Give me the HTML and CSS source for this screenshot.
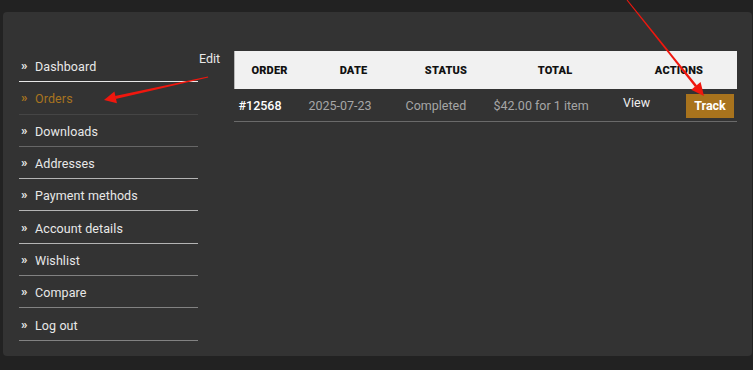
FILE: index.html
```html
<!DOCTYPE html>
<html lang="en">
<head>
<meta charset="utf-8">
<title>My account - Orders</title>
<link rel="stylesheet" href="styles.css">
</head>
<body>
<div class="page">
  <div class="panel">
    <nav class="sidebar">
      <a class="nav-item line-bright" href="#"><span class="chev">»</span>Dashboard</a>
      <a class="nav-item active line-dark" href="#"><span class="chev">»</span>Orders</a>
      <a class="nav-item line-mid" href="#"><span class="chev">»</span>Downloads</a>
      <a class="nav-item line-light" href="#"><span class="chev">»</span>Addresses</a>
      <a class="nav-item line-light" href="#"><span class="chev">»</span>Payment methods</a>
      <a class="nav-item line-light" href="#"><span class="chev">»</span>Account details</a>
      <a class="nav-item line-soft" href="#"><span class="chev">»</span>Wishlist</a>
      <a class="nav-item line-soft" href="#"><span class="chev">»</span>Compare</a>
      <a class="nav-item line-soft" href="#"><span class="chev">»</span>Log out</a>
    </nav>
    <div class="edit-col"><a class="edit" href="#">Edit</a></div>
    <div class="content">
      <div class="orders">
        <div class="thead">
          <div class="th">ORDER</div>
          <div class="th">DATE</div>
          <div class="th">STATUS</div>
          <div class="th">TOTAL</div>
          <div class="th">ACTIONS</div>
        </div>
        <div class="trow">
          <div class="td num">#12568</div>
          <div class="td muted">2025-07-23</div>
          <div class="td muted">Completed</div>
          <div class="td muted">$42.00 for 1 item</div>
          <div class="td actions"><a class="view" href="#">View</a><a class="track" href="#">Track</a></div>
        </div>
      </div>
    </div>
  </div>
  <svg class="annot" width="753" height="370" viewBox="0 0 753 370" aria-hidden="true">
    <polygon fill="#f0170e" points="208,76.6 208.2,77.6 115.6,98.9 115,96" />
    <polygon fill="#f0170e" points="104,100 114.4,91.5 117,103.3" />
    <polygon fill="#f0170e" points="627.4,-0.3 626.6,0.3 695,87 697,85.4" />
    <polygon fill="#f0170e" points="704,96 700.6,82.1 691.2,89.7" />
  </svg>
</div>
</body>
</html>
```

FILE: styles.css
```css
html, body {
  margin: 0;
  padding: 0;
}
body {
  background: #222222;
  font-family: Roboto, "Liberation Sans", Arial, sans-serif;
  color: #e6e6e6;
}
a { text-decoration: none; color: inherit; }

.page {
  position: relative;
  width: 753px;
  height: 370px;
  padding: 12px 1px 0 3px;
  box-sizing: border-box;
}
.panel {
  background: #333333;
  border-radius: 4px;
  height: 344px;
  display: flex;
  padding: 38px 0 0 16px;
  box-sizing: border-box;
}

.sidebar {
  width: 179px;
  display: flex;
  flex-direction: column;
}
.nav-item {
  display: flex;
  align-items: center;
  height: 32.3px;
  padding-top: 2px;
  box-sizing: border-box;
  border-bottom: 1px solid #999;
  font-size: 12.5px;
  color: #e8e8e8;
  letter-spacing: 0.1px;
  flex: none;
}
.chev {
  width: 14px;
  padding-left: 2px;
  font-size: 13px;
  font-weight: 700;
  line-height: 1;
  position: relative;
  top: -1px;
}
.nav-item.active { color: #a8741f; }
.line-bright { border-bottom-color: #e8e8e8; }
.line-dark { border-bottom-color: #454545; }
.line-mid { border-bottom-color: #676767; }
.line-light { border-bottom-color: #b4b4b4; }
.line-soft { border-bottom-color: #828282; }

.edit-col {
  width: 36px;
  padding-top: 1px;
}
.edit {
  display: block;
  font-size: 12.5px;
  color: #e8e8e8;
  padding-left: 1px;
}

.content {
  width: 503px;
  padding-top: 1px;
}
.orders { width: 503px; }
.thead {
  display: grid;
  grid-template-columns: 70px 97px 88px 130px 118px;
  height: 38px;
  background: #f1f1f1;
  border-left: 1px solid #b8b8b8;
  box-sizing: border-box;
  align-items: center;
}
.th {
  text-align: center;
  font-size: 11px;
  font-weight: 900;
  color: #111;
  letter-spacing: 0.2px;
}
.th:first-child { margin-left: -1px; }
.trow {
  display: grid;
  grid-template-columns: 70px 97px 88px 130px 118px;
  height: 32px;
  border-bottom: 1px solid #6a6a6a;
  align-items: center;
}
.td {
  padding-left: 4.5px;
  font-size: 12.5px;
}
.num { color: #ffffff; font-weight: 500; }
.muted { color: #a6a6a6; }
.actions {
  display: flex;
  align-items: center;
  padding-left: 4px;
}
.view {
  color: #eeeeee;
  width: 63px;
  position: relative;
  top: -3px;
}
.track {
  background: #a8731d;
  color: #ffffff;
  font-weight: 700;
  width: 48px;
  height: 24px;
  display: flex;
  align-items: center;
  justify-content: center;
  font-size: 12.5px;
  margin-top: 1px;
}

.annot {
  position: absolute;
  left: 0;
  top: 0;
  pointer-events: none;
}
```
